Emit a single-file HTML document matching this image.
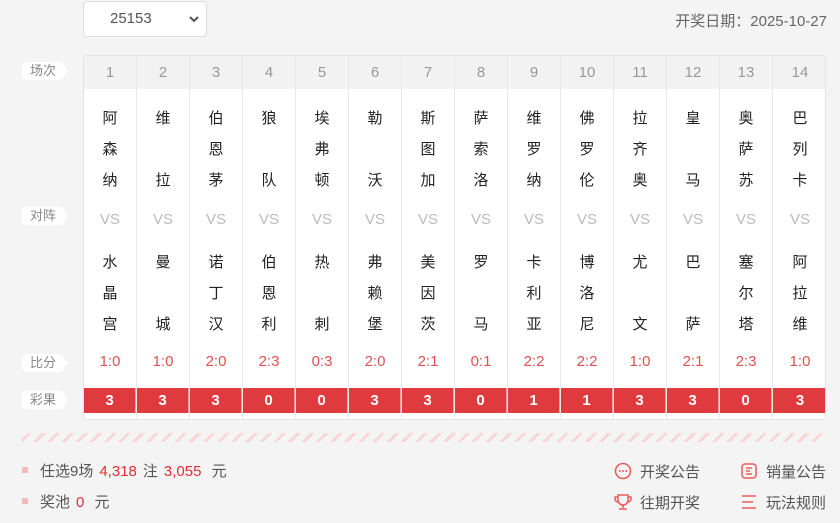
<!DOCTYPE html>
<html><head><meta charset="utf-8"><style>
*{margin:0;padding:0;box-sizing:border-box}
body{width:840px;height:523px;background:#f4f4f4;font-family:"Liberation Sans","Noto Sans CJK SC",sans-serif;position:relative;overflow:hidden;color:#333}
.sel{position:absolute;left:83px;top:1px;width:124px;height:36px;background:#fff;border:1px solid #ddd;border-radius:4px;font-size:15px;color:#555;line-height:34px;padding-left:26px}
.sel svg{position:absolute;right:7px;top:14px}
.date{position:absolute;right:13px;top:10px;font-size:15px;color:#666}
.tbl{position:absolute;left:83px;top:55px;width:743px;height:365px;background:#fff;border:1px solid #e3e3e3;border-radius:3px;overflow:hidden}
.hd{position:absolute;left:0;top:0;width:100%;height:33px;background:#f2f2f2}
.col{position:absolute;top:0;width:53px;height:365px;border-right:1px solid #e8e8e8}
.n{position:absolute;top:0;width:100%;height:33px;line-height:33px;text-align:center;font-size:15px;color:#999}
.t{position:absolute;left:0;width:100%;display:flex;flex-direction:column;justify-content:space-between;align-items:center;font-size:15px;line-height:20px;color:#222}
.t1{top:53px;height:82px}.t2{top:197px;height:82px}
.vs{position:absolute;top:155px;width:100%;text-align:center;font-size:15px;color:#bbb}
.sc{position:absolute;top:297px;width:100%;text-align:center;font-size:15px;color:#e25050}
.r{position:absolute;top:332px;width:100%;height:25px;background:#df3b3f;color:#fff;font-weight:bold;font-size:15px;text-align:center;line-height:25px;border-right:1px solid #f0a0a0}
.lb{position:absolute;left:22px;width:42px;height:18px;background:#fff;border-radius:5px;font-size:13px;color:#888;text-align:center;line-height:18px}
.lb:after{content:"";position:absolute;right:-4px;top:5px;border-left:4px solid #fff;border-top:4px solid transparent;border-bottom:4px solid transparent}
.stripe{position:absolute;left:22px;top:433px;width:804px;height:9px;background:repeating-linear-gradient(135deg,transparent 0 4px,#f9d6d6 4px 7px,transparent 7px 10px)}
.info{position:absolute;left:22px;font-size:15px;color:#555}
.info i{display:inline-block;width:6px;height:6px;background:#f6b9b9;margin-right:12px;vertical-align:3px}
.info b{color:#e02f35;font-weight:normal;margin:0 6px}
.lk{position:absolute;font-size:15px;color:#555}
.lk svg{position:absolute;left:-26px;top:1px}
</style></head><body>
<div class="sel">25153<svg width="10" height="7" viewBox="0 0 10 7"><path d="M1 1l4 4 4-4" stroke="#555" stroke-width="2" fill="none"/></svg></div>
<div class="date">开奖日期：2025-10-27</div>

<div class="lb" style="top:62px">场次</div>
<div class="lb" style="top:207px">对阵</div>
<div class="lb" style="top:354px">比分</div>
<div class="lb" style="top:391px">彩果</div>

<div class="tbl"><div class="hd"></div>
<div class="col" style="left:0"><div class="n">1</div><div class="t t1"><span>阿</span><span>森</span><span>纳</span></div><div class="vs">VS</div><div class="t t2"><span>水</span><span>晶</span><span>宫</span></div><div class="sc">1:0</div><div class="r">3</div></div>
<div class="col" style="left:53px"><div class="n">2</div><div class="t t1"><span>维</span><span>拉</span></div><div class="vs">VS</div><div class="t t2"><span>曼</span><span>城</span></div><div class="sc">1:0</div><div class="r">3</div></div>
<div class="col" style="left:106px"><div class="n">3</div><div class="t t1"><span>伯</span><span>恩</span><span>茅</span></div><div class="vs">VS</div><div class="t t2"><span>诺</span><span>丁</span><span>汉</span></div><div class="sc">2:0</div><div class="r">3</div></div>
<div class="col" style="left:159px"><div class="n">4</div><div class="t t1"><span>狼</span><span>队</span></div><div class="vs">VS</div><div class="t t2"><span>伯</span><span>恩</span><span>利</span></div><div class="sc">2:3</div><div class="r">0</div></div>
<div class="col" style="left:212px"><div class="n">5</div><div class="t t1"><span>埃</span><span>弗</span><span>顿</span></div><div class="vs">VS</div><div class="t t2"><span>热</span><span>刺</span></div><div class="sc">0:3</div><div class="r">0</div></div>
<div class="col" style="left:265px"><div class="n">6</div><div class="t t1"><span>勒</span><span>沃</span></div><div class="vs">VS</div><div class="t t2"><span>弗</span><span>赖</span><span>堡</span></div><div class="sc">2:0</div><div class="r">3</div></div>
<div class="col" style="left:318px"><div class="n">7</div><div class="t t1"><span>斯</span><span>图</span><span>加</span></div><div class="vs">VS</div><div class="t t2"><span>美</span><span>因</span><span>茨</span></div><div class="sc">2:1</div><div class="r">3</div></div>
<div class="col" style="left:371px"><div class="n">8</div><div class="t t1"><span>萨</span><span>索</span><span>洛</span></div><div class="vs">VS</div><div class="t t2"><span>罗</span><span>马</span></div><div class="sc">0:1</div><div class="r">0</div></div>
<div class="col" style="left:424px"><div class="n">9</div><div class="t t1"><span>维</span><span>罗</span><span>纳</span></div><div class="vs">VS</div><div class="t t2"><span>卡</span><span>利</span><span>亚</span></div><div class="sc">2:2</div><div class="r">1</div></div>
<div class="col" style="left:477px"><div class="n">10</div><div class="t t1"><span>佛</span><span>罗</span><span>伦</span></div><div class="vs">VS</div><div class="t t2"><span>博</span><span>洛</span><span>尼</span></div><div class="sc">2:2</div><div class="r">1</div></div>
<div class="col" style="left:530px"><div class="n">11</div><div class="t t1"><span>拉</span><span>齐</span><span>奥</span></div><div class="vs">VS</div><div class="t t2"><span>尤</span><span>文</span></div><div class="sc">1:0</div><div class="r">3</div></div>
<div class="col" style="left:583px"><div class="n">12</div><div class="t t1"><span>皇</span><span>马</span></div><div class="vs">VS</div><div class="t t2"><span>巴</span><span>萨</span></div><div class="sc">2:1</div><div class="r">3</div></div>
<div class="col" style="left:636px"><div class="n">13</div><div class="t t1"><span>奥</span><span>萨</span><span>苏</span></div><div class="vs">VS</div><div class="t t2"><span>塞</span><span>尔</span><span>塔</span></div><div class="sc">2:3</div><div class="r">0</div></div>
<div class="col" style="left:689px;width:54px;border-right:none"><div class="n">14</div><div class="t t1"><span>巴</span><span>列</span><span>卡</span></div><div class="vs">VS</div><div class="t t2"><span>阿</span><span>拉</span><span>维</span></div><div class="sc">1:0</div><div class="r" style="border-right:none">3</div></div>
</div>

<div class="stripe"></div>
<div class="info" style="top:460px"><i></i>任选9场<b>4,318</b>注<b>3,055</b> 元</div>
<div class="info" style="top:491px"><i></i>奖池<b>0</b> 元</div>

<div class="lk" style="left:640px;top:461px"><svg width="18" height="18" viewBox="0 0 18 18"><circle cx="9" cy="9" r="7.5" fill="none" stroke="#e85b5b" stroke-width="1.5"/><circle cx="5.8" cy="9" r="1" fill="#e85b5b"/><circle cx="9" cy="9" r="1" fill="#e85b5b"/><circle cx="12.2" cy="9" r="1" fill="#e85b5b"/></svg>开奖公告</div>
<div class="lk" style="left:766px;top:461px"><svg width="18" height="18" viewBox="0 0 18 18"><rect x="2" y="2" width="14" height="14" rx="3" fill="none" stroke="#e85b5b" stroke-width="1.5"/><path d="M6 6h6M6 9h4M6 12h6" stroke="#e85b5b" stroke-width="1.5"/></svg>销量公告</div>
<div class="lk" style="left:640px;top:492px"><svg width="18" height="18" viewBox="0 0 18 18"><path d="M4 2h10v5a5 5 0 0 1-10 0z M4 4H1v2a3 3 0 0 0 3 3M14 4h3v2a3 3 0 0 1-3 3M9 12v3M5 16h8" fill="none" stroke="#e85b5b" stroke-width="1.5"/></svg>往期开奖</div>
<div class="lk" style="left:766px;top:492px"><svg width="18" height="18" viewBox="0 0 18 18"><path d="M2 3h14M2 9h11M2 15h14" stroke="#e85b5b" stroke-width="1.6"/></svg>玩法规则</div>
</body></html>
